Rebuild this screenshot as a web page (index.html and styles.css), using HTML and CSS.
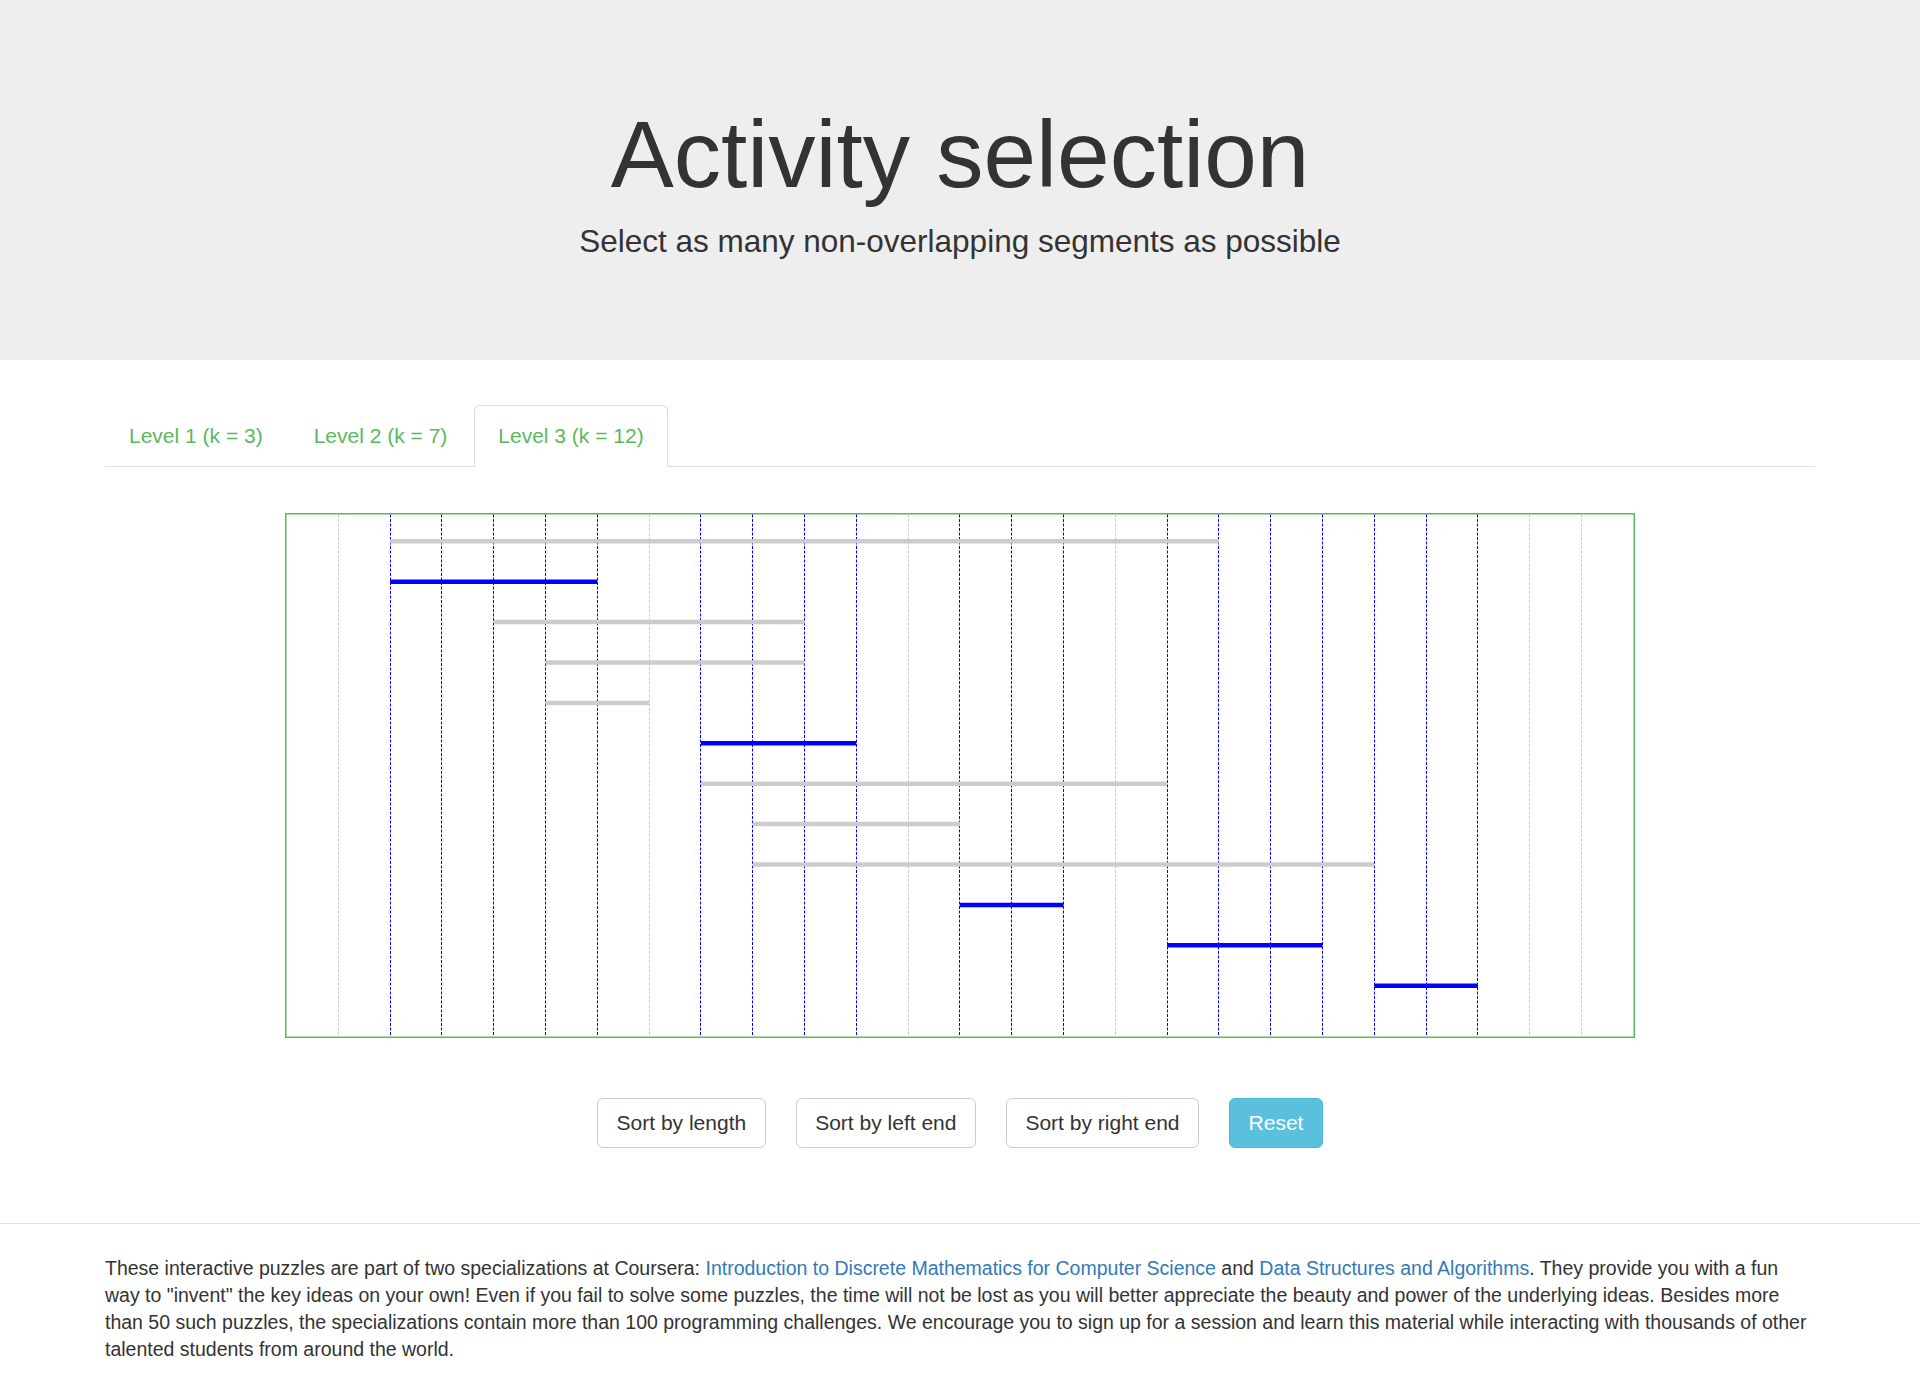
FILE: index.html
```html
<!DOCTYPE html>
<html lang="en">
<head>
<meta charset="utf-8">
<title>Activity selection</title>
<link rel="stylesheet" href="styles.css">
</head>
<body>
<header class="jumbotron">
  <h1 class="title">Activity selection</h1>
  <p class="subtitle">Select as many non-overlapping segments as possible</p>
</header>

<main class="container">
  <ul class="nav-tabs">
    <li class="tab"><a href="#">Level 1 (k = 3)</a></li>
    <li class="tab"><a href="#">Level 2 (k = 7)</a></li>
    <li class="tab active"><a href="#">Level 3 (k = 12)</a></li>
  </ul>

  <div class="board">
    <svg class="chart" width="1350" height="525" viewBox="0 0 1350 525" xmlns="http://www.w3.org/2000/svg">
      <rect class="frame" x="0.75" y="0.75" width="1348.5" height="523.5"/>
      <g class="grid">
        <line class="gl off" x1="53.5" y1="1.5" x2="53.5" y2="523.5"/>
        <line class="gl on" x1="105.5" y1="1.5" x2="105.5" y2="523.5"/>
        <line class="gl on" x1="156.5" y1="1.5" x2="156.5" y2="523.5"/>
        <line class="gl on" x1="208.5" y1="1.5" x2="208.5" y2="523.5"/>
        <line class="gl on" x1="260.5" y1="1.5" x2="260.5" y2="523.5"/>
        <line class="gl on" x1="312.5" y1="1.5" x2="312.5" y2="523.5"/>
        <line class="gl off" x1="364.5" y1="1.5" x2="364.5" y2="523.5"/>
        <line class="gl on" x1="415.5" y1="1.5" x2="415.5" y2="523.5"/>
        <line class="gl on" x1="467.5" y1="1.5" x2="467.5" y2="523.5"/>
        <line class="gl on" x1="519.5" y1="1.5" x2="519.5" y2="523.5"/>
        <line class="gl on" x1="571.5" y1="1.5" x2="571.5" y2="523.5"/>
        <line class="gl off" x1="623.5" y1="1.5" x2="623.5" y2="523.5"/>
        <line class="gl on" x1="674.5" y1="1.5" x2="674.5" y2="523.5"/>
        <line class="gl on" x1="726.5" y1="1.5" x2="726.5" y2="523.5"/>
        <line class="gl on" x1="778.5" y1="1.5" x2="778.5" y2="523.5"/>
        <line class="gl off" x1="830.5" y1="1.5" x2="830.5" y2="523.5"/>
        <line class="gl on" x1="882.5" y1="1.5" x2="882.5" y2="523.5"/>
        <line class="gl on" x1="933.5" y1="1.5" x2="933.5" y2="523.5"/>
        <line class="gl on" x1="985.5" y1="1.5" x2="985.5" y2="523.5"/>
        <line class="gl on" x1="1037.5" y1="1.5" x2="1037.5" y2="523.5"/>
        <line class="gl on" x1="1089.5" y1="1.5" x2="1089.5" y2="523.5"/>
        <line class="gl on" x1="1141.5" y1="1.5" x2="1141.5" y2="523.5"/>
        <line class="gl on" x1="1192.5" y1="1.5" x2="1192.5" y2="523.5"/>
        <line class="gl off" x1="1244.5" y1="1.5" x2="1244.5" y2="523.5"/>
        <line class="gl off" x1="1296.5" y1="1.5" x2="1296.5" y2="523.5"/>
      </g>
      <g class="segments">
        <line class="seg" x1="105.1" y1="28.3" x2="933.9" y2="28.3"/>
        <line class="seg sel" x1="105.1" y1="68.7" x2="312.3" y2="68.7"/>
        <line class="seg" x1="208.7" y1="109.1" x2="519.5" y2="109.1"/>
        <line class="seg" x1="260.5" y1="149.5" x2="519.5" y2="149.5"/>
        <line class="seg" x1="260.5" y1="189.9" x2="364.1" y2="189.9"/>
        <line class="seg sel" x1="415.9" y1="230.3" x2="571.3" y2="230.3"/>
        <line class="seg" x1="415.9" y1="270.7" x2="882.1" y2="270.7"/>
        <line class="seg" x1="467.7" y1="311.1" x2="674.9" y2="311.1"/>
        <line class="seg" x1="467.7" y1="351.5" x2="1089.3" y2="351.5"/>
        <line class="seg sel" x1="674.9" y1="391.9" x2="778.5" y2="391.9"/>
        <line class="seg sel" x1="882.1" y1="432.3" x2="1037.5" y2="432.3"/>
        <line class="seg sel" x1="1089.3" y1="472.7" x2="1192.9" y2="472.7"/>
      </g>
    </svg>
  </div>

  <div class="actions">
    <button class="btn">Sort by length</button>
    <button class="btn">Sort by left end</button>
    <button class="btn">Sort by right end</button>
    <button class="btn btn-info">Reset</button>
  </div>
</main>

<footer class="footer">
  <div class="container">
    <p class="about">These interactive puzzles are part of two specializations at Coursera: <a href="#">Introduction to Discrete Mathematics for Computer Science</a> and <a href="#">Data Structures and Algorithms</a>. They provide you with a fun way to "invent" the key ideas on your own! Even if you fail to solve some puzzles, the time will not be lost as you will better appreciate the beauty and power of the underlying ideas. Besides more than 50 such puzzles, the specializations contain more than 100 programming challenges. We encourage you to sign up for a session and learn this material while interacting with thousands of other talented students from around the world.</p>
  </div>
</footer>
</body>
</html>
```

FILE: styles.css
```css
* {
  box-sizing: border-box;
}

html, body {
  margin: 0;
  padding: 0;
  background: #fff;
}

body {
  font-family: "Liberation Sans", Arial, Helvetica, sans-serif;
  color: #333;
  font-size: 21px;
  line-height: 30px;
}

a {
  color: #337ab7;
  text-decoration: none;
}

.jumbotron {
  background: #eee;
  height: 360px;
  padding-top: 102px;
  text-align: center;
}

.title {
  margin: 0;
  font-size: 94.5px;
  line-height: 104px;
  font-weight: 400;
  color: #333;
}

.subtitle {
  margin: 13px 0 0;
  font-size: 31.5px;
  line-height: 45px;
  font-weight: 400;
}

.container {
  width: 1710px;
  margin: 0 auto;
}

.nav-tabs {
  list-style: none;
  margin: 45px 0 0;
  padding: 0;
  display: flex;
  border-bottom: 1px solid #ddd;
}

.tab {
  margin-right: 3px;
  margin-bottom: -1px;
}

.tab a {
  display: block;
  padding: 15px 23px;
  line-height: 30px;
  font-size: 21px;
  color: #5cb85c;
  border: 1px solid transparent;
  border-radius: 6px 6px 0 0;
}

.tab.active a {
  background: #fff;
  border-color: #ddd #ddd transparent;
}

.board {
  margin-top: 46px;
  display: flex;
  justify-content: center;
}

.chart {
  display: block;
}

.frame {
  fill: none;
  stroke: #5cb85c;
  stroke-width: 1.5;
}

.gl {
  stroke-width: 1;
  stroke-dasharray: 3 1.5;
}

.gl.on {
  stroke: #0000ff;
}

.gl.off {
  stroke: #cccccc;
}

.seg {
  stroke: #cccccc;
  stroke-width: 4.5;
}

.seg.sel {
  stroke: #0000ff;
}

.actions {
  margin-top: 60px;
  display: flex;
  justify-content: center;
  gap: 30px;
}

.btn {
  font-family: inherit;
  font-size: 21px;
  line-height: 30px;
  padding: 9px 18.5px;
  color: #333;
  background: #fff;
  border: 1px solid #ccc;
  border-radius: 6px;
  cursor: pointer;
}

.btn-info {
  color: #fff;
  background: #5bc0de;
  border-color: #46b8da;
}

.footer {
  margin-top: 75px;
  border-top: 1px solid #ddd;
  padding-top: 31px;
}

.about {
  margin: 0;
  font-size: 19.5px;
  line-height: 27px;
}
```
